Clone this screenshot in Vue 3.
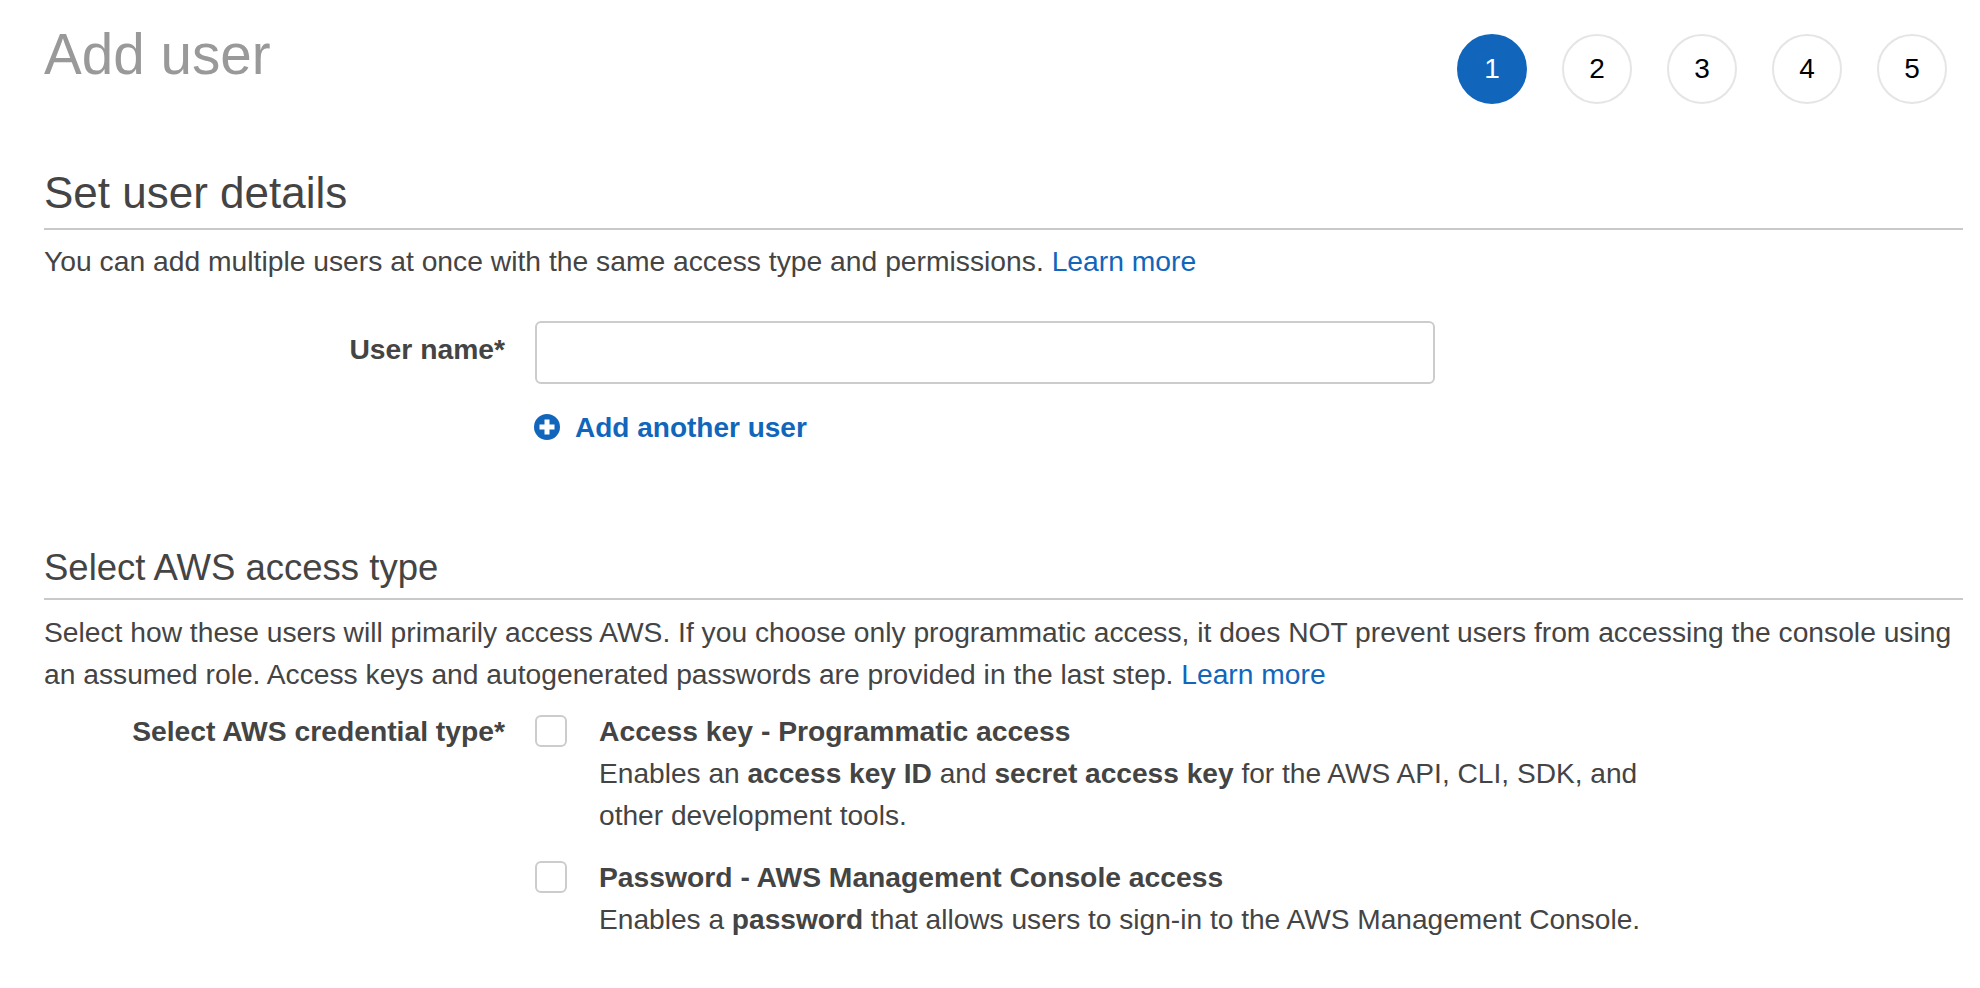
<script setup>
const steps = [1, 2, 3, 4, 5]
</script>

<template>
  <main class="page">
    <header class="top">
      <h1 class="title">Add user</h1>
      <ol class="steps">
        <li v-for="s in steps" :key="s" class="step" :class="{ active: s === 1 }">{{ s }}</li>
      </ol>
    </header>

    <section class="details">
      <h2 class="heading">Set user details</h2>
      <p class="para">You can add multiple users at once with the same access type and permissions. <a class="link">Learn more</a></p>
      <div class="name-row">
        <label class="label name-label">User name*</label>
        <input class="input" type="text" />
      </div>
      <a class="add">
        <svg class="plus" viewBox="0 0 26 26" aria-hidden="true">
          <circle cx="13" cy="13" r="13" fill="#1166bb" />
          <path d="M10.5 5.5h5v5h5v5h-5v5h-5v-5h-5v-5h5z" fill="#fff" />
        </svg>
        <span>Add another user</span>
      </a>
    </section>

    <section class="access">
      <h2 class="heading">Select AWS access type</h2>
      <p class="para">Select how these users will primarily access AWS. If you choose only programmatic access, it does NOT prevent users from accessing the console using an assumed role. Access keys and autogenerated passwords are provided in the last step. <a class="link">Learn more</a></p>
      <div class="cred">
        <div class="label cred-label">Select AWS credential type*</div>
        <div class="options">
          <div class="option">
            <span class="box"></span>
            <div class="opt-text">
              <div class="opt-title">Access key - Programmatic access</div>
              <div class="opt-desc">Enables an <b>access key ID</b> and <b>secret access key</b> for the AWS API, CLI, SDK, and other development tools.</div>
            </div>
          </div>
          <div class="option">
            <span class="box"></span>
            <div class="opt-text">
              <div class="opt-title">Password - AWS Management Console access</div>
              <div class="opt-desc">Enables a <b>password</b> that allows users to sign-in to the AWS Management Console.</div>
            </div>
          </div>
        </div>
      </div>
    </section>
  </main>
</template>

<style scoped>
.page {
  padding: 0 17px 0 44px;
  font-family: "Liberation Sans", Arial, sans-serif;
  font-size: 28.28px;
  line-height: 42px;
  color: #444;
  background: #fff;
}
.top {
  display: flex;
  justify-content: space-between;
  align-items: flex-start;
  padding: 34px 16px 0 0;
  height: 157px;
  box-sizing: border-box;
}
.title {
  margin: -11px 0 0;
  font-size: 56.6px;
  line-height: 64px;
  font-weight: 400;
  color: #999;
}
.steps {
  display: flex;
  gap: 35px;
  margin: 0;
  padding: 0;
  list-style: none;
  font-size: 28px;
}
.step {
  width: 70px;
  height: 70px;
  box-sizing: border-box;
  display: flex;
  align-items: center;
  justify-content: center;
  border: 2px solid #e5e5e5;
  border-radius: 50%;
  color: #000;
}
.step.active {
  background: #1166bb;
  border-color: #1166bb;
  color: #fff;
}
.heading {
  margin: 0;
  height: 73px;
  box-sizing: border-box;
  border-bottom: 2px solid #c9c9c9;
  font-size: 44px;
  line-height: 72px;
  font-weight: 400;
  color: #444;
}
.access .heading {
  font-size: 36.5px;
  height: 64px;
  line-height: 64px;
}
.para {
  margin: 10px 0 0;
}
.access .para {
  font-size: 28.22px;
  margin-top: 11px;
}
.link {
  color: #1166bb;
}
.name-row {
  display: flex;
  align-items: flex-start;
  margin-top: 39px;
}
.label {
  width: 461px;
  margin-right: 30px;
  flex: none;
  box-sizing: border-box;
  text-align: right;
  font-weight: 700;
}
.name-label {
  padding-top: 7px;
}
.input {
  width: 900px;
  height: 63px;
  box-sizing: border-box;
  border: 2px solid #ccc;
  border-radius: 6px;
  background: #fff;
}
.add {
  display: flex;
  align-items: center;
  gap: 15px;
  margin: 23px 0 0 490px;
  color: #1166bb;
  font-size: 28px;
  font-weight: 700;
}
.plus {
  width: 26px;
  height: 26px;
  flex: none;
  margin-top: -3px;
}
.access {
  margin-top: 87px;
}
.cred {
  display: flex;
  align-items: flex-start;
  margin-top: 15px;
}
.options {
  display: flex;
  flex-direction: column;
  gap: 19px;
}
.option {
  display: flex;
  align-items: flex-start;
}
.box {
  width: 32px;
  height: 32px;
  box-sizing: border-box;
  flex: none;
  margin: 5px 32px 0 0;
  border: 2px solid #ccc;
  border-radius: 6px;
  background: #fff;
}
.opt-text {
  width: 1080px;
}
.opt-title {
  font-weight: 700;
}
.opt-desc {
  margin-top: 1px;
  font-size: 28.12px;
}
</style>
